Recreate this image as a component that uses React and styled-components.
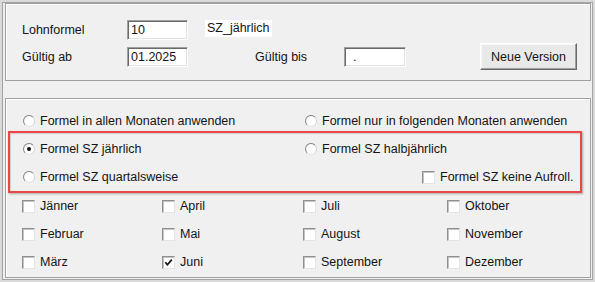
import React from 'react';
import styled, { createGlobalStyle } from 'styled-components';

const Global = createGlobalStyle`
  html, body { margin: 0; padding: 0; background: #f0f0f0; }
  body {
    font-family: "Liberation Sans", Arial, sans-serif;
    font-size: 12.5px;
    color: #141414;
  }
  * { box-sizing: border-box; }
`;

const Frame = styled.div`
  width: 595px;
  height: 282px;
  border: 2px solid #dadada;
  box-shadow: inset 0 0 0 1px #a3a3a3;
  padding: 1px 2px 2px 3px;
  display: flex;
  flex-direction: column;
  gap: 17px;
  background: #f0f0f0;
`;

const Panel = styled.div`
  position: relative;
  height: ${p => p.$h}px;
  border: 1px solid #a0a0a0;
  box-shadow: inset 1px 1px 0 #ffffff;
  padding: ${p => p.$pad};
`;

const FieldRow = styled.div`
  display: flex;
  align-items: center;
  height: ${p => p.$h}px;
  margin-top: ${p => p.$mt || 0}px;
`;

const Label = styled.div`
  width: ${p => p.$w}px;
  margin-left: ${p => p.$ml || 0}px;
  white-space: nowrap;
`;

const TextBox = styled.div`
  width: ${p => p.$w}px;
  height: 20px;
  background: #fff;
  border: 1px solid;
  border-color: #a0a0a0 #ffffff #ffffff #a0a0a0;
  box-shadow: inset 1px 1px 0 #696969, inset -1px -1px 0 #e3e3e3;
  padding-left: ${p => p.$indent || 3}px;
  line-height: 18px;
  white-space: nowrap;
`;

const InfoLabel = styled.div`
  align-self: flex-start;
  margin-left: 17px;
  height: 17px;
  line-height: 17px;
  padding: 0 2px;
  background: #ffffff;
`;

const Button = styled.button`
  margin-left: 74px;
  width: 97px;
  height: 27px;
  font: inherit;
  color: #141414;
  background: #e9e9e9;
  border: 1px solid;
  border-color: #ffffff #696969 #696969 #ffffff;
  box-shadow: inset -1px -1px 0 #a0a0a0, inset 1px 1px 0 #f8f8f8;
  padding: 0;
`;

const OptionGrid = styled.div`
  display: grid;
  grid-template-columns: 282px 1fr;
  grid-auto-rows: 28px;
  padding-left: 16px;
`;

const MonthGrid = styled.div`
  display: grid;
  grid-template-columns: 140px 141px 144px 1fr;
  grid-auto-rows: 28px;
  padding-left: 16px;
  margin-top: 1px;
`;

const Option = styled.div`
  display: flex;
  align-items: center;
  gap: 5px;
  margin-left: ${p => p.$ml || 0}px;
  white-space: nowrap;
`;

const Indicator = styled.span`
  width: 13px;
  height: 13px;
  flex: none;
  display: flex;
  align-items: center;
  justify-content: center;
`;

const RadioCircle = styled.span`
  width: 12px;
  height: 12px;
  margin-left: 1px;
  border-radius: 50%;
  border: 1px solid;
  border-color: #7d7d7d #d6d6d6 #e6e6e6 #8a8a8a;
  background: radial-gradient(circle at 60% 60%, #ffffff 55%, #ececec 100%);
  display: flex;
  align-items: center;
  justify-content: center;
`;

const RadioDot = styled.span`
  width: 4px;
  height: 4px;
  border-radius: 50%;
  background: #111;
`;

const CheckBox = styled.span`
  width: 13px;
  height: 13px;
  background: #fff;
  border: 1px solid;
  border-color: #8f8f8f #e4e4e4 #e4e4e4 #8f8f8f;
  box-shadow: inset 1px 1px 0 #c4c4c4;
  display: flex;
  align-items: center;
  justify-content: center;
`;

const Highlight = styled.div`
  position: absolute;
  left: 2px;
  top: 32px;
  width: 574px;
  height: 62px;
  border: 2px solid #ec4646;
  box-shadow: 1px 1px 2px rgba(0, 0, 0, 0.3), inset 1px 1px 1px rgba(0, 0, 0, 0.15);
  pointer-events: none;
`;

const Radio = ({ checked, children }) => (
  <Option>
    <Indicator>
      <RadioCircle>{checked && <RadioDot />}</RadioCircle>
    </Indicator>
    <span>{children}</span>
  </Option>
);

const Check = ({ checked, children, ml }) => (
  <Option $ml={ml}>
    <Indicator>
      <CheckBox>
        {checked && (
          <svg width="9" height="9" viewBox="0 0 9 9">
            <path d="M1.3 4.3 L3.4 6.8 L7.8 1.6" fill="none" stroke="#111" strokeWidth="1.7" />
          </svg>
        )}
      </CheckBox>
    </Indicator>
    <span>{children}</span>
  </Option>
);

const months = [
  ['Jänner', 'April', 'Juli', 'Oktober'],
  ['Februar', 'Mai', 'August', 'November'],
  ['März', 'Juni', 'September', 'Dezember'],
];

export default function App() {
  return (
    <>
      <Global />
      <Frame>
        <Panel $h={78} $pad="16px 0 0 16px">
          <FieldRow $h={20}>
            <Label $w={105}>Lohnformel</Label>
            <TextBox $w={61}>10</TextBox>
            <InfoLabel>SZ_jährlich</InfoLabel>
          </FieldRow>
          <FieldRow $h={27} $mt={3}>
            <Label $w={105}>Gültig ab</Label>
            <TextBox $w={61}>01.2025</TextBox>
            <Label $w={89} $ml={67}>Gültig bis</Label>
            <TextBox $w={62} $indent={8}>.</TextBox>
            <Button>Neue Version</Button>
          </FieldRow>
        </Panel>
        <Panel $h={180} $pad="8px 0 0 0">
          <OptionGrid>
            <Radio>Formel in allen Monaten anwenden</Radio>
            <Radio>Formel nur in folgenden Monaten anwenden</Radio>
            <Radio checked>Formel SZ jährlich</Radio>
            <Radio>Formel SZ halbjährlich</Radio>
            <Radio>Formel SZ quartalsweise</Radio>
            <Check ml={118}>Formel SZ keine Aufroll.</Check>
          </OptionGrid>
          <MonthGrid>
            {months.flat().map(m => (
              <Check key={m} checked={m === 'Juni'}>{m}</Check>
            ))}
          </MonthGrid>
          <Highlight />
        </Panel>
      </Frame>
    </>
  );
}
